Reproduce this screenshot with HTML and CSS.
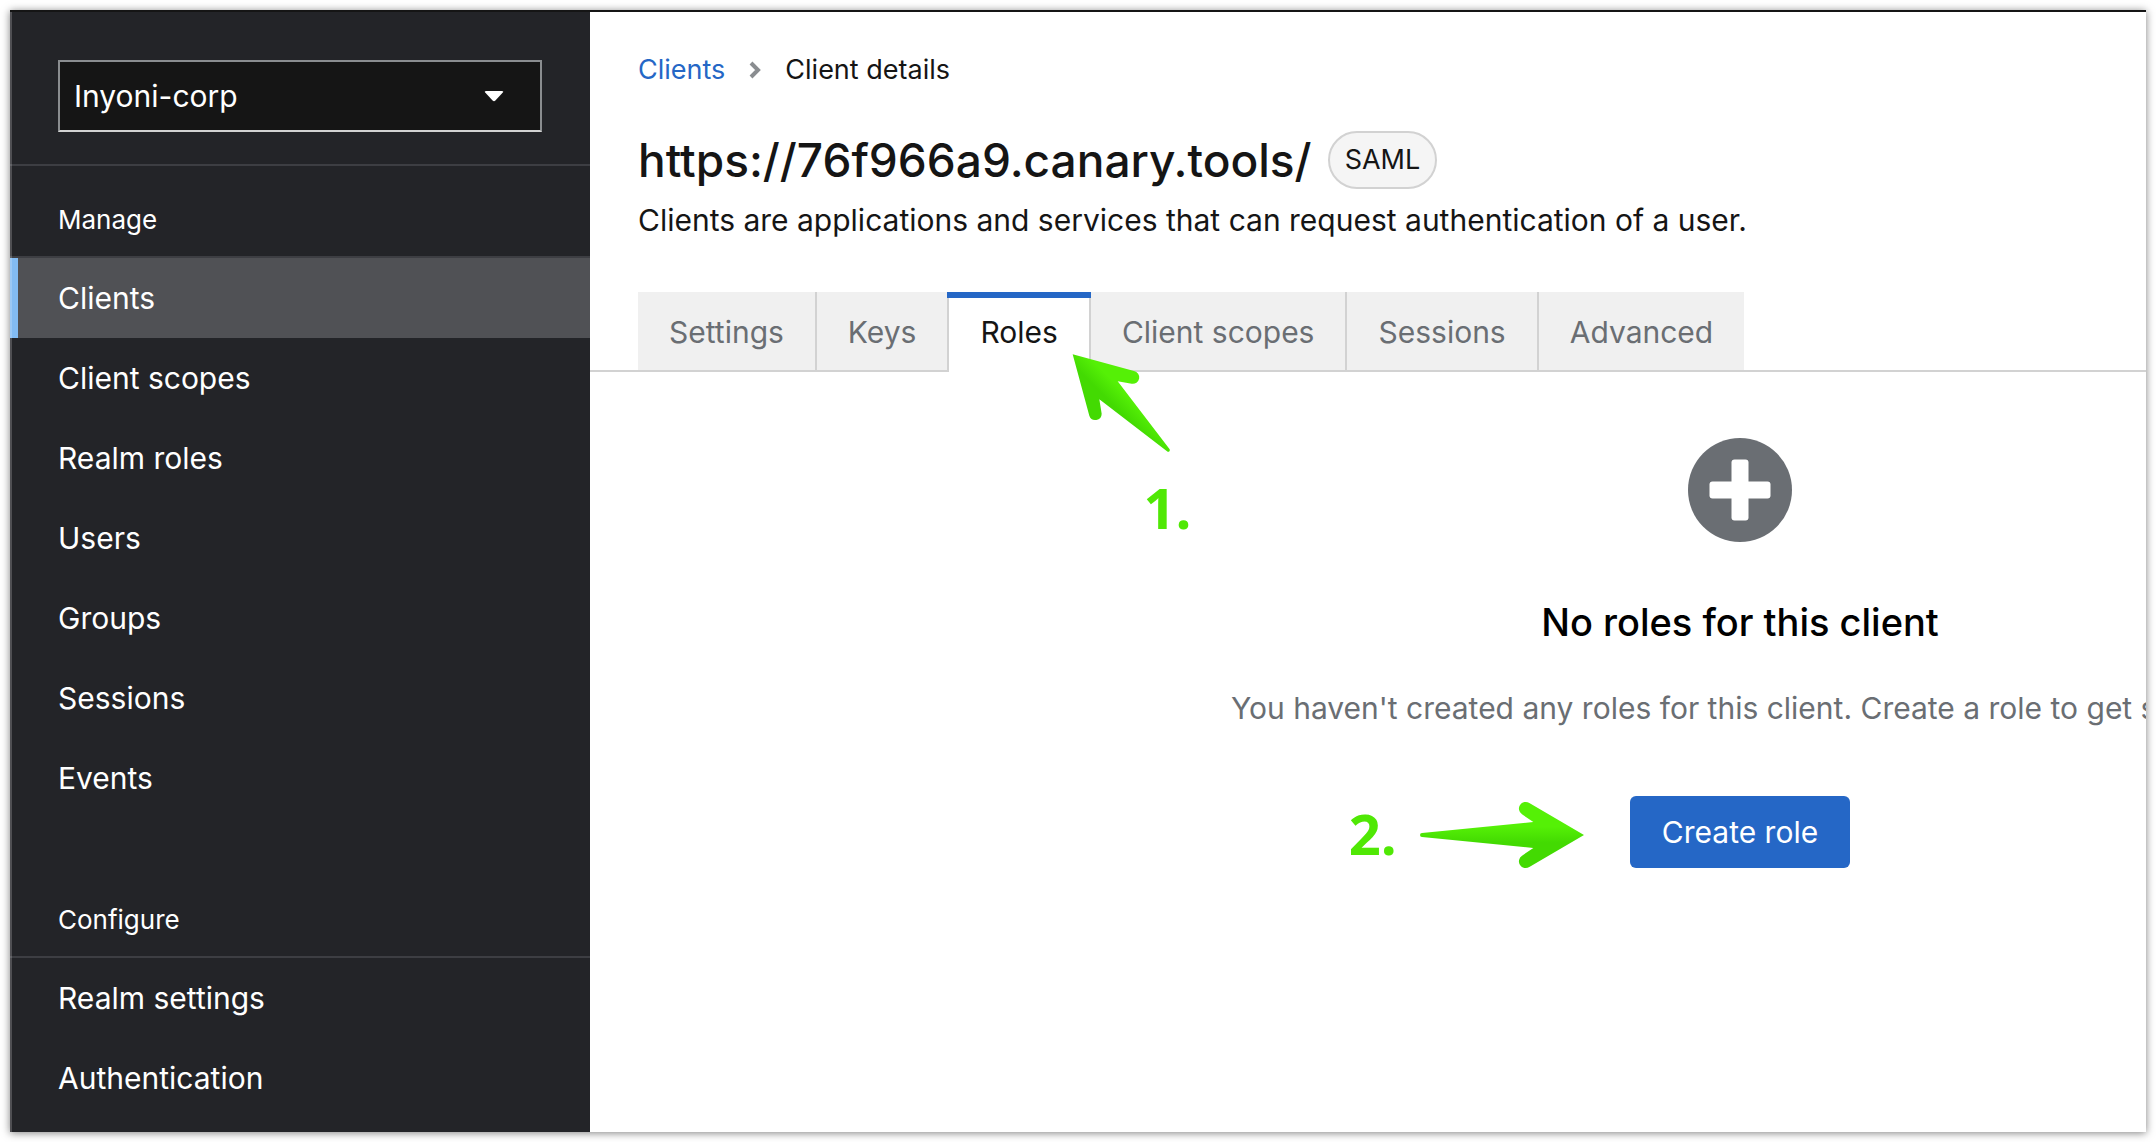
FILE: index.html
```html
<!DOCTYPE html>
<html lang="en">
<head>
    <meta charset="UTF-8">
    <meta name="viewport" content="width=device-width, initial-scale=1.0">
    <title>Client details</title>
    <link rel="stylesheet" href="styles.css">
</head>
<body>
    <div class="window">
        <aside class="sidebar">
            <div class="realm">
                <div class="realm-select">
                    <select aria-label="Realm">
                        <option>Inyoni-corp</option>
                    </select>
                    <svg class="caret" viewBox="0 0 20 12" width="20" height="12" aria-hidden="true">
                        <path d="M2 1h16q2 0 .8 1.6l-7.4 8q-1.4 1.4-2.8 0l-7.4-8Q0 1 2 1z" fill="#fff"/>
                    </svg>
                </div>
            </div>
            <nav>
                <section class="nav-section">
                    <h2 class="nav-title">Manage</h2>
                    <a href="#" class="nav-link active">Clients</a>
                    <a href="#" class="nav-link">Client scopes</a>
                    <a href="#" class="nav-link">Realm roles</a>
                    <a href="#" class="nav-link">Users</a>
                    <a href="#" class="nav-link">Groups</a>
                    <a href="#" class="nav-link">Sessions</a>
                    <a href="#" class="nav-link">Events</a>
                </section>
                <section class="nav-section">
                    <h2 class="nav-title">Configure</h2>
                    <a href="#" class="nav-link">Realm settings</a>
                    <a href="#" class="nav-link">Authentication</a>
                </section>
            </nav>
        </aside>

        <main class="main">
            <header class="page-header">
                <div class="breadcrumb">
                    <a href="#">Clients</a>
                    <svg viewBox="0 0 12 18" width="12" height="18" aria-hidden="true">
                        <path d="M2 2l7 7-7 7" fill="none" stroke="#8a8d90" stroke-width="4"/>
                    </svg>
                    <span>Client details</span>
                </div>
                <div class="title-row">
                    <h1>https://76f966a9.canary.tools/</h1>
                    <span class="badge">SAML</span>
                </div>
                <p class="description">Clients are applications and services that can request authentication of a user.</p>
            </header>

            <div class="tabs">
                <button class="tab">Settings</button>
                <button class="tab">Keys</button>
                <div class="tab-wrap">
                    <button class="tab active">Roles</button>
                    <svg class="arrow arrow-tab" viewBox="396 252 297 297" width="99" height="99" aria-hidden="true">
                        <defs>
                            <linearGradient id="green-diagonal" gradientUnits="userSpaceOnUse" x1="520" y1="334" x2="484" y2="370">
                                <stop offset="0" stop-color="#55f006"/>
                                <stop offset="1" stop-color="#43da02"/>
                            </linearGradient>
                        </defs>
                        <path fill="url(#green-diagonal)" d="M398 253L582 303A19 19 0 0 1 575 341L533 334L689 538A5 5 0 0 1 683 545L478 388L485 431A19 19 0 0 1 448 437Z"/>
                    </svg>
                    <span class="step step-tab">1.</span>
                </div>
                <button class="tab">Client scopes</button>
                <button class="tab">Sessions</button>
                <button class="tab">Advanced</button>
            </div>

            <div class="empty-state">
                <svg class="empty-icon" viewBox="0 0 104 104" width="104" height="104" aria-hidden="true">
                    <circle cx="52" cy="52" r="52" fill="#6a6e73"/>
                    <rect x="43.5" y="21.5" width="17" height="61" rx="3" fill="#fff"/>
                    <rect x="21.5" y="43.5" width="61" height="17" rx="3" fill="#fff"/>
                </svg>
                <h2>No roles for this client</h2>
                <p>You haven't created any roles for this client. Create a role to get started.</p>
                <div class="action">
                    <button class="primary">Create role</button>
                    <span class="step step-action">2.</span>
                    <svg class="arrow arrow-action" viewBox="240 63 495 204" width="165" height="68" aria-hidden="true">
                        <defs>
                            <linearGradient id="green-vertical" gradientUnits="userSpaceOnUse" x1="0" y1="140" x2="0" y2="188">
                                <stop offset="0" stop-color="#55f006"/>
                                <stop offset="1" stop-color="#43da02"/>
                            </linearGradient>
                        </defs>
                        <path fill="url(#green-vertical)" d="M732 165L568 69A20 20 0 0 0 546 103L580 126L246 159A6 6 0 0 0 246 171L580 204L546 227A20 20 0 0 0 568 261Z"/>
                    </svg>
                </div>
            </div>
        </main>
    </div>
</body>
</html>
```
FILE: styles.css
```css
* {
    box-sizing: border-box;
}
body {
    margin: 0;
    padding: 10px;
    background: #fff;
    color: #151515;
    font-family: Inter, Roboto, sans-serif;
    font-size: 30px;
    line-height: 48px;
}
h1, h2, p {
    margin: 0;
}
a {
    text-decoration: none;
}
button, select {
    font: inherit;
}
.window {
    display: flex;
    height: calc(100vh - 20px);
    overflow: hidden;
    border-top: 2px solid #151515;
    box-shadow: 0 1px 8px rgba(0, 0, 0, 0.5);
}

/* sidebar */
.sidebar {
    position: relative;
    flex: 0 0 580px;
    background: #232428;
    color: #fff;
}
.sidebar::after {
    content: "";
    position: absolute;
    top: 0;
    bottom: 0;
    left: 0;
    width: 2px;
    background: rgba(255, 255, 255, 0.2);
}
.realm {
    padding: 48px 48px 32px;
    border-bottom: 2px solid #3d3e43;
}
.realm-select {
    position: relative;
}
.realm-select select {
    display: block;
    width: 100%;
    height: 72px;
    padding: 0 14px;
    appearance: none;
    background: #151515;
    color: #fff;
    border: 2px solid #8a8d90;
    border-bottom-color: #d2d2d2;
    border-radius: 0;
}
.caret {
    position: absolute;
    top: 30px;
    right: 38px;
}
.nav-section + .nav-section {
    margin-top: 48px;
}
.nav-title {
    padding: 34px 48px 16px;
    border-bottom: 2px solid #3d3e43;
    font-size: 26px;
    font-weight: 400;
    line-height: 40px;
}
.nav-link {
    display: block;
    padding: 16px 48px;
    color: #fff;
}
.nav-link.active {
    padding-left: 40px;
    border-left: 8px solid #82bbf3;
    background: #505155;
}

/* main */
.main {
    flex: 1;
    min-width: 0;
    overflow: hidden;
}
.page-header {
    padding: 38px 48px 48px;
}
.breadcrumb {
    display: flex;
    align-items: center;
    gap: 24px;
    margin-bottom: 41px;
    font-size: 27px;
    line-height: 40px;
}
.breadcrumb a {
    color: #2567c6;
}
.title-row {
    display: flex;
    align-items: center;
    gap: 16px;
    margin-bottom: 7px;
}
h1 {
    font-size: 46px;
    font-weight: 500;
    line-height: 58px;
}
.badge {
    padding: 7px 15px;
    border: 2px solid #d2d2d2;
    border-radius: 30px;
    background: #f5f5f5;
    font-size: 27px;
    line-height: 40px;
}

/* tabs */
.tabs {
    display: flex;
    padding-left: 48px;
    box-shadow: inset 0 -2px #d2d2d2;
}
.tab {
    height: 80px;
    padding: 0 31px;
    border: 0;
    border-right: 2px solid #d2d2d2;
    box-shadow: inset 0 -2px #d2d2d2;
    background: #f0f0f0;
    color: #6a6e73;
}
.tab:last-child {
    border-right: 0;
}
.tab-wrap {
    position: relative;
}
.tab-wrap .tab {
    border-right: 2px solid #d2d2d2;
}
.tab.active {
    background: #fff;
    box-shadow: none;
    color: #151515;
}
.tab-wrap::before {
    content: "";
    position: absolute;
    top: 0;
    left: -2px;
    right: 0;
    height: 6px;
    background: #2567c6;
}

/* empty state, wider than the window and cut off by it */
.empty-state {
    display: flex;
    flex-direction: column;
    align-items: center;
    min-width: 2300px;
    padding-top: 66px;
}
.empty-state h2 {
    margin: 56px 0 38px;
    color: #000;
    font-size: 38px;
    font-weight: 500;
}
.empty-state p {
    margin-bottom: 64px;
    color: #6a6e73;
}
.action {
    position: relative;
}
.primary {
    display: block;
    height: 72px;
    padding: 0 32px;
    border: 0;
    border-radius: 6px;
    background: #2567c6;
    color: #fff;
}

/* step callouts */
.arrow, .step {
    position: absolute;
    z-index: 1;
}
.step {
    color: #50e805;
    font-family: "Open Sans", "Noto Sans", sans-serif;
    font-size: 56px;
    font-weight: 700;
    line-height: 56px;
}
.arrow-tab {
    top: 62px;
    left: 123px;
}
.step-tab {
    top: 187px;
    left: 194px;
}
.arrow-action {
    top: 5px;
    left: -210px;
}
.step-action {
    top: 9px;
    left: -281px;
}
```
